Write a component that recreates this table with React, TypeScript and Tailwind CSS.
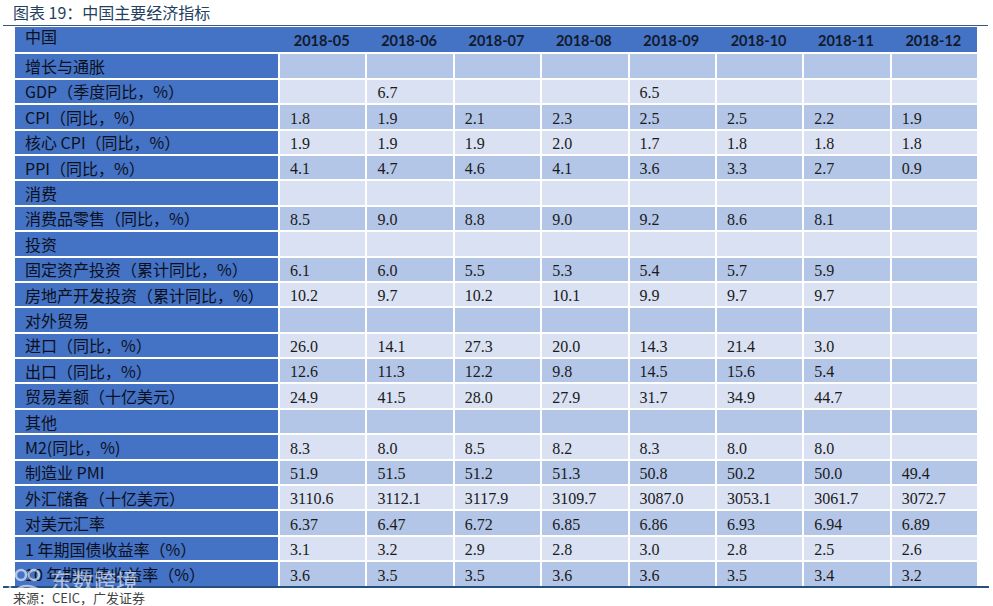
import React from 'react';

type Row = { label: string; values?: string[] };

const months = ['2018-05', '2018-06', '2018-07', '2018-08', '2018-09', '2018-10', '2018-11', '2018-12'];

const rows: Row[] = [
  { label: '增长与通胀' },
  { label: 'GDP（季度同比，%）', values: ['', '6.7', '', '', '6.5', '', '', ''] },
  { label: 'CPI（同比，%）', values: ['1.8', '1.9', '2.1', '2.3', '2.5', '2.5', '2.2', '1.9'] },
  { label: '核心 CPI（同比，%）', values: ['1.9', '1.9', '1.9', '2.0', '1.7', '1.8', '1.8', '1.8'] },
  { label: 'PPI（同比，%）', values: ['4.1', '4.7', '4.6', '4.1', '3.6', '3.3', '2.7', '0.9'] },
  { label: '消费' },
  { label: '消费品零售（同比，%）', values: ['8.5', '9.0', '8.8', '9.0', '9.2', '8.6', '8.1', ''] },
  { label: '投资' },
  { label: '固定资产投资（累计同比，%）', values: ['6.1', '6.0', '5.5', '5.3', '5.4', '5.7', '5.9', ''] },
  { label: '房地产开发投资（累计同比，%）', values: ['10.2', '9.7', '10.2', '10.1', '9.9', '9.7', '9.7', ''] },
  { label: '对外贸易' },
  { label: '进口（同比，%）', values: ['26.0', '14.1', '27.3', '20.0', '14.3', '21.4', '3.0', ''] },
  { label: '出口（同比，%）', values: ['12.6', '11.3', '12.2', '9.8', '14.5', '15.6', '5.4', ''] },
  { label: '贸易差额（十亿美元）', values: ['24.9', '41.5', '28.0', '27.9', '31.7', '34.9', '44.7', ''] },
  { label: '其他' },
  { label: 'M2(同比，%)', values: ['8.3', '8.0', '8.5', '8.2', '8.3', '8.0', '8.0', ''] },
  { label: '制造业 PMI', values: ['51.9', '51.5', '51.2', '51.3', '50.8', '50.2', '50.0', '49.4'] },
  { label: '外汇储备（十亿美元）', values: ['3110.6', '3112.1', '3117.9', '3109.7', '3087.0', '3053.1', '3061.7', '3072.7'] },
  { label: '对美元汇率', values: ['6.37', '6.47', '6.72', '6.85', '6.86', '6.93', '6.94', '6.89'] },
  { label: '1 年期国债收益率（%）', values: ['3.1', '3.2', '2.9', '2.8', '3.0', '2.8', '2.5', '2.6'] },
  { label: '10 年期国债收益率（%）', values: ['3.6', '3.5', '3.5', '3.6', '3.6', '3.5', '3.4', '3.2'] },
];

const cjk = "font-['Noto_Sans_CJK_SC',sans-serif]";

export default function App() {
  return (
    <div className="relative w-[993px] h-[606px] overflow-hidden bg-white">
      <div className={`h-[25px] pl-[13px] pt-[3px] text-[16px] leading-[18px] text-[#243f60] ${cjk}`}>
        图表 19：中国主要经济指标
      </div>
      <div className="ml-[3px] w-[985px] h-px bg-[#3b5878]" />

      <div className="ml-[15px] mt-px w-[962px]">
        {/* header */}
        <div className="grid grid-cols-[263px_repeat(8,minmax(0,1fr))] h-[25.4px] bg-[#4472c4]">
          <div className={`pl-[10px] pt-px text-[16px] leading-none text-[#0b1020] ${cjk}`}>中国</div>
          {months.map((m) => (
            <div
              key={m}
              className="flex items-end justify-center pb-[4px] text-[14.5px] leading-none font-bold text-[#111a2c] font-['Lato',sans-serif]"
            >
              {m}
            </div>
          ))}
        </div>

        {rows.map((row, i) => {
          const dark = i % 2 === 0;
          return (
            <div
              key={row.label}
              className="grid grid-cols-[263px_repeat(8,minmax(0,1fr))] h-[25.4px] border-t-2 border-white"
            >
              <div className={`flex items-center pl-[10px] bg-[#4472c4] text-[16px] leading-none text-[#0b1020] whitespace-nowrap ${cjk}`}>
                {row.label}
              </div>
              {Array.from({ length: 8 }).map((_, j) => (
                <div
                  key={j}
                  className={`flex items-end pl-[10px] pb-[2px] border-l-2 border-white text-[16px] leading-none text-[#1a1a1a] font-['Liberation_Serif',serif] ${
                    dark ? 'bg-[#b4c6e7]' : 'bg-[#d9e1f2]'
                  }`}
                >
                  {row.values ? row.values[j] : ''}
                </div>
              ))}
            </div>
          );
        })}
      </div>

      <div className="ml-[3px] w-[986px] h-[2px] bg-[#25507e]" />
      <div className={`pl-[13px] pt-[3px] text-[13px] leading-none text-[#444] ${cjk}`}>来源：CEIC，广发证券</div>

      {/* watermark */}
      <div className="absolute left-[6px] top-[566px] flex items-center gap-[6px] opacity-60 pointer-events-none">
        <svg width="38" height="26" viewBox="0 0 38 26" fill="none" stroke="#ffffff" strokeWidth="2.5">
          <path d="M4 6 L4 24" />
          <circle cx="15" cy="9" r="5" />
          <circle cx="28" cy="9" r="5" />
          <path d="M10 24 Q20 16 33 24" />
        </svg>
        <span className={`text-[22px] leading-none text-white ${cjk}`}>东数跨境</span>
      </div>
    </div>
  );
}
